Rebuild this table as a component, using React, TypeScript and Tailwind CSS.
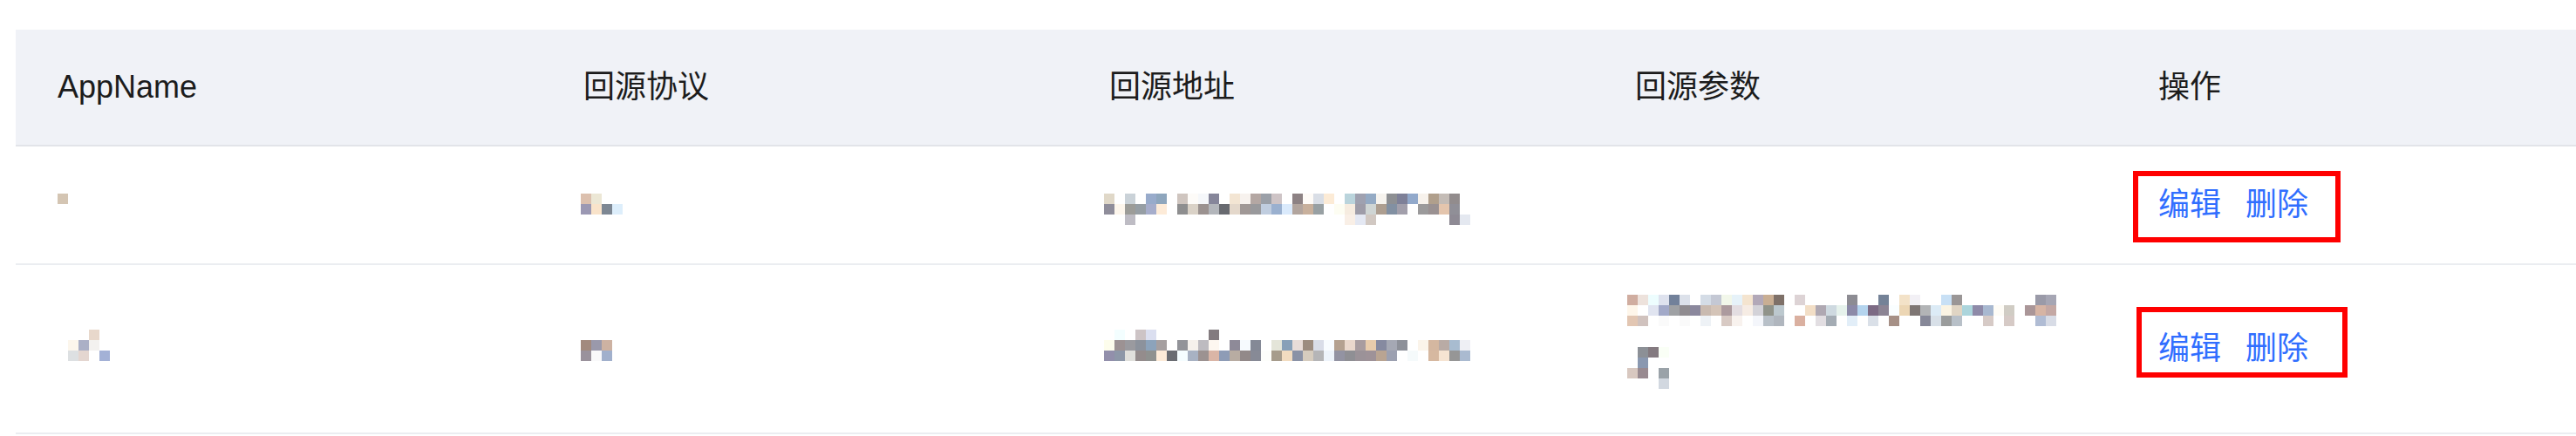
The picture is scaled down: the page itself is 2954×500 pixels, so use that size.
import React from "react";

const Mosaic = ({ rows, className = "" }: { rows: string[]; className?: string }) => {
  const parsed = rows.map((r) => (r.trim() ? r.trim().split(/\s+/) : []));
  const n = Math.max(1, ...parsed.map((r) => r.length));
  return (
    <svg
      width={n * 12}
      height={rows.length * 12}
      shapeRendering="crispEdges"
      className={"block shrink-0 " + className}
    >
      {parsed.map((r, y) =>
        r.map((c, x) =>
          c === "." ? null : (
            <rect key={`${x}-${y}`} x={x * 12} y={y * 12} width={12} height={12} fill={"#" + c} />
          )
        )
      )}
    </svg>
  );
};

const r1App = ["d4c5b3", "", ""];
const r1Proto = ["dcc0ae ece7d5", "9b98b3 f9e3ca 7d8793 ddeefb", ""];
const r1Addr = [
  "e0d8c8 . cad2d8 . 98abcb 8ea6bd . cfc5bf fdfbf8 f5f7fa 86869a . f3e5d3 f7f2ee b4a7a3 9ba0a8 cec4c6 . 8d8284 fefbf7 d9dee6 fcebd6 . bad4dc 9fa1b0 94aac4 f6f3ee 8d8f93 7e8098 92a9cb f7f2ec b09f8c c4bcb6 928c8d",
  "8f8d9a fdf6ec 9c9c98 969ea4 a6adcb fdebd8 . 8e8e8f dad2c7 9b9290 b3b6bb 686a70 e4d8cb a09896 99999c c0cddf 9ab0cf daeafc b2a59e c8b09c 98a0a3 . fdfdf2 f6ece0 9e9ca8 cfd5d4 ad9e90 8290a2 a29fab . 9b9a9b 9a9192 e4c5ad 908f97",
  ". . bebcc4 . . . . . . . . . . . . . . . . . . . . f9efe6 e4e8f3 d1c8c2 . . . . . . . 8e8a94 e4e8f0",
];

const r2App = [". . . e8d8cb .", ". fcf6ec abb0c6 f3f1ef .", ". dde0e2 e4d6d0 . a3b1d6"];
const r2Proto = ["", "a28a7e 9a99ab cdb2a2", "9a929c f9f9fa a1b0cc"];
const r2Addr = [
  ". f3feff . cdc4c6 dbdff0 . . . . . 837b7f",
  "fdfdec 9c9293 9a9a9f 8c929c 8ca3bb a59fa0 . 929398 f5f1ec bdbbc0 fdf7f0 . 8e8a98 f6fafe 848996 . e4e5d9 88a0b8 e8dcd8 9c8c80 d9dde8 f8fcff b4a190 ead8cc a89c9f e8ccac 868aa0 a5a8b4 8d9099 . fbf4ea d4b7a0 b9aba5 a8bcd0 eeeff4",
  "928fab 8d97a8 e0e0dc 948c8c 8f918f fdebd8 6a6c72 f5fdff a8b2c3 9c9291 dab5a6 8e9cb6 b8aca2 928989 878a96 fdfefb a69c8c f2dcc0 8a92a6 d6ccbe b5b5b7 eef4fb 9393a2 8f8f94 9b9298 9e9298 b9a492 9ca0b0 . f5fafb . d6b8a0 f6e4d2 969696 aabad0",
];
const r2Params = [
  "d0ada0 ede2dc edfdfe dee2ee 72819a dce1ea . d4dce6 c4c8d4 f2f7ea e6f2f9 f4e4cf b2a8b8 c9ae93 7e7068 . ddd3d5 . . . . 8d8c93 . . 748297 . f3e2c8 f2f0f5 . . c8e0f5 9a9696 . . . . . . . 9a9aa8 a6a6b4",
  "fef6ea . e0e4f0 a2a9c8 9fa1a4 8f8b8f 8b889d c9bab0 d4c4b8 ac9a9e e3dde1 f6ece4 d3d2d8 90938a bcc8ce . . f2dec6 afa8b2 ced9e0 e6f2ec 8c8aa8 b4d4ee 7c6a84 8c8494 fafeff ecd6b4 7e7674 b2b4b6 dcebf6 fbf4e3 e0d5c4 acd5dc 8e8aa8 a8b8d0 fefcf6 d0ccc4 . aa9698 d6b4a4 c4a8a4",
  "e2c6b2 d0c2be . fafafa . fafafa . eef2f6 . d8cac4 f8f2ee . f4f6fb b8c0c8 b0b6be . dab0a0 . e2dee2 a4acb4 . e2eef8 . dae0e8 . a69086 . . 868898 d8e0e8 9a9c9c b8c0c8 . . d6cac6 . d6cac6 . . b0bcd4 d8dce6",
  "",
  "",
  ". 8c9096 847a80 fafff6",
  ". 8a98b0",
  "d8c8c0 988a90 . 9aa2a8",
  ". . . d2d8e0",
];

const cols = "grid grid-cols-[603px_603px_603px_603px_603px]";
const cell = "flex items-center pl-[48px] h-full";
const lastCell = "flex items-center pl-[45px] h-full";

const Actions = ({ box }: { box: string }) => (
  <div className="relative inline-flex leading-[60px] text-[#306eff]">
    <span>编辑</span>
    <span className="ml-[28px]">删除</span>
    <div className={"absolute border-[6px] border-[#ff0000] " + box} />
  </div>
);

export default function App() {
  return (
    <div className="min-h-[500px] w-full overflow-hidden bg-white pt-[34px] pl-[18px] font-['Liberation_Sans','Noto_Sans_CJK_SC',sans-serif] text-[36px] leading-[60px]">
      <div className="w-[3015px]">
        <div className={cols + " h-[134px] bg-[#f0f2f7] border-b-2 border-[#e2e4e9] text-[#1c1c1c]"}>
          <div className={cell}>AppName</div>
          <div className={cell}>回源协议</div>
          <div className={cell}>回源地址</div>
          <div className={cell}>回源参数</div>
          <div className={lastCell}>操作</div>
        </div>
        <div className={cols + " h-[136px] border-b-2 border-[#ebedf1]"}>
          <div className={cell}>
            <Mosaic rows={r1App} className="mt-[10px]" />
          </div>
          <div className={cell}>
            <Mosaic rows={r1Proto} className="mt-[10px] -ml-[3px]" />
          </div>
          <div className={cell}>
            <Mosaic rows={r1Addr} className="mt-[10px] -ml-[6px]" />
          </div>
          <div className={cell} />
          <div className={lastCell}>
            <Actions box="left-[-29px] top-[-9px] w-[238px] h-[82px]" />
          </div>
        </div>
        <div className={cols + " h-[194px] border-b-2 border-[#ebedf1]"}>
          <div className={cell}>
            <Mosaic rows={r2App} className="mb-[8px]" />
          </div>
          <div className={cell}>
            <Mosaic rows={r2Proto} className="mb-[8px] -ml-[3px]" />
          </div>
          <div className={cell}>
            <Mosaic rows={r2Addr} className="mb-[8px] -ml-[6px]" />
          </div>
          <div className={cell}>
            <Mosaic rows={r2Params} className="mb-[16px] -ml-[9px]" />
          </div>
          <div className={lastCell}>
            <Actions box="left-[-25px] top-[-18px] w-[242px] h-[81px]" />
          </div>
        </div>
      </div>
    </div>
  );
}
